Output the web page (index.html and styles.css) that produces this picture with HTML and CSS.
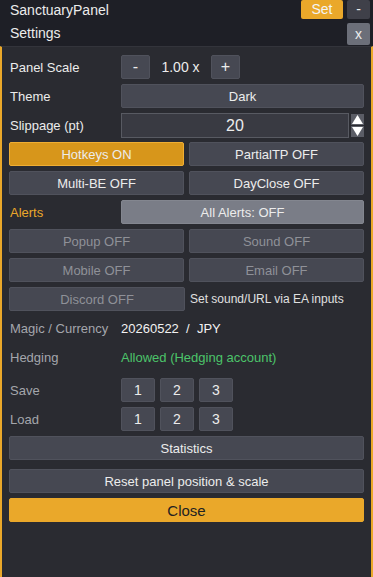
FILE: index.html
```html
<!DOCTYPE html>
<html lang="en">

<head>
  <meta charset="UTF-8">
  <meta name="viewport" content="width=device-width, initial-scale=1.0">
  <title>SanctuaryPanel</title>
  <link rel="stylesheet" href="styles.css">
</head>

<body>
  <div class="header">
    <div class="title-row">
      <span class="title">SanctuaryPanel</span>
      <button class="hbtn set">Set</button>
      <button class="hbtn min">-</button>
    </div>
    <div class="title-row">
      <span class="title">Settings</span>
      <button class="hbtn close-x">x</button>
    </div>
  </div>

  <div class="panel">
    <div class="row">
      <span class="label">Panel Scale</span>
      <button class="btn small">-</button>
      <span class="scale-value">1.00 x</span>
      <button class="btn small">+</button>
    </div>

    <div class="row">
      <span class="label">Theme</span>
      <button class="btn grow">Dark</button>
    </div>

    <div class="row">
      <span class="label">Slippage (pt)</span>
      <div class="input">20</div>
      <div class="spinner">
        <svg width="13" height="11" viewBox="0 0 13 11"><rect width="13" height="11" fill="#5b5d66"/><path d="M1 10 L6.5 1 L12 10 Z" fill="#fff"/></svg>
        <svg width="13" height="11" viewBox="0 0 13 11"><rect width="13" height="11" fill="#5b5d66"/><path d="M1 1 L6.5 10 L12 1 Z" fill="#fff"/></svg>
      </div>
    </div>

    <div class="row pair">
      <button class="btn on">Hotkeys ON</button>
      <button class="btn">PartialTP OFF</button>
    </div>

    <div class="row pair">
      <button class="btn">Multi-BE OFF</button>
      <button class="btn">DayClose OFF</button>
    </div>

    <div class="row">
      <span class="label alerts">Alerts</span>
      <button class="btn grow light">All Alerts: OFF</button>
    </div>

    <div class="row pair">
      <button class="btn dim">Popup OFF</button>
      <button class="btn dim">Sound OFF</button>
    </div>

    <div class="row pair">
      <button class="btn dim">Mobile OFF</button>
      <button class="btn dim">Email OFF</button>
    </div>

    <div class="row pair">
      <button class="btn dim">Discord OFF</button>
      <span class="hint">Set sound/URL via EA inputs</span>
    </div>

    <div class="row">
      <span class="label muted">Magic / Currency</span>
      <span class="value">20260522&nbsp; / &nbsp;JPY</span>
    </div>

    <div class="row">
      <span class="label muted">Hedging</span>
      <span class="value green">Allowed (Hedging account)</span>
    </div>

    <div class="row slots gap-top">
      <span class="label muted">Save</span>
      <button class="btn slot">1</button>
      <button class="btn slot">2</button>
      <button class="btn slot">3</button>
    </div>

    <div class="row slots">
      <span class="label muted">Load</span>
      <button class="btn slot">1</button>
      <button class="btn slot">2</button>
      <button class="btn slot">3</button>
    </div>

    <div class="row">
      <button class="btn grow">Statistics</button>
    </div>

    <div class="row gap-top">
      <button class="btn grow">Reset panel position &amp; scale</button>
    </div>

    <div class="row">
      <button class="btn grow primary">Close</button>
    </div>
  </div>
</body>

</html>
```

FILE: styles.css
```css
:root {
  --header-bg: #1e1f26;
  --panel-bg: #2a2b31;
  --btn-bg: #464852;
  --btn-border: #50525c;
  --orange: #eaa82a;
  --text: #ececec;
}

* {
  box-sizing: border-box;
}

body {
  margin: 0;
  height: 100vh;
  display: flex;
  flex-direction: column;
  background-color: var(--panel-bg);
  font-family: "Liberation Sans", Arial, sans-serif;
  font-size: 13px;
  color: var(--text);
  overflow: hidden;
}

button {
  font-family: inherit;
  font-size: 13px;
  color: var(--text);
  padding: 0;
  cursor: pointer;
}

.header {
  background-color: var(--header-bg);
  height: 46px;
  padding-right: 3px;
}

.title-row {
  height: 23px;
  display: flex;
  align-items: flex-start;
  gap: 4px;
}

.title {
  flex: 1;
  padding-left: 10px;
  font-size: 14px;
  line-height: 21px;
}

.hbtn {
  height: 19px;
  border: none;
  border-radius: 2px;
  font-size: 14px;
  line-height: 19px;
}

.hbtn.set {
  width: 42px;
  background-color: var(--orange);
  color: #f4f4f4;
}

.hbtn.min {
  width: 23px;
  background-color: #3f4049;
}

.hbtn.close-x {
  width: 23px;
  height: 22px;
  background-color: #6c6f79;
}

.panel {
  flex: 1;
  display: flex;
  flex-direction: column;
  border-left: 2px solid var(--orange);
  border-right: 2px solid var(--orange);
  border-top: 1px solid #33343b;
  padding: 8px 7px 0 7px;
}

.row {
  height: 24px;
  flex-shrink: 0;
  display: flex;
  align-items: center;
  margin-bottom: 5px;
}

.row.pair {
  gap: 5px;
}

.row.pair > * {
  flex: 1;
}

.row.gap-top {
  margin-top: 4px;
}

.label {
  width: 112px;
  flex-shrink: 0;
  padding-left: 1px;
}

.label.alerts {
  color: var(--orange);
}

.label.muted {
  color: #a4a6ac;
}

.btn {
  height: 24px;
  background-color: var(--btn-bg);
  border: 1px solid var(--btn-border);
  border-radius: 2px;
}

.btn.grow {
  flex: 1;
}

.btn.small {
  width: 29px;
  font-size: 16px;
}

.scale-value {
  width: 61px;
  text-align: center;
  font-size: 14px;
}

.input {
  width: 229px;
  height: 25px;
  background-color: #393a42;
  border: 1px solid #585a62;
  text-align: center;
  font-size: 16px;
  line-height: 23px;
}

.spinner {
  display: flex;
  flex-direction: column;
  gap: 1px;
  margin-left: 2px;
}

.spinner svg {
  display: block;
}

.btn.on {
  background-color: #d7961b;
  border-color: #efae34;
}

.btn.light {
  background-color: #7a7d87;
  border-color: #83868f;
}

.btn.dim {
  color: #8f9198;
}

.hint {
  color: #e0e0e0;
  font-size: 12px;
  white-space: nowrap;
}

.value {
  font-size: 13px;
  color: #f2f2f2;
}

.value.green {
  color: #4cc46a;
}

.row.slots {
  gap: 5px;
}

.row.slots .label {
  width: 107px;
}

.btn.slot {
  width: 34px;
  font-size: 14px;
}

.btn.primary {
  background-color: var(--orange);
  border-color: var(--orange);
  color: #222;
  font-size: 15px;
}
```
